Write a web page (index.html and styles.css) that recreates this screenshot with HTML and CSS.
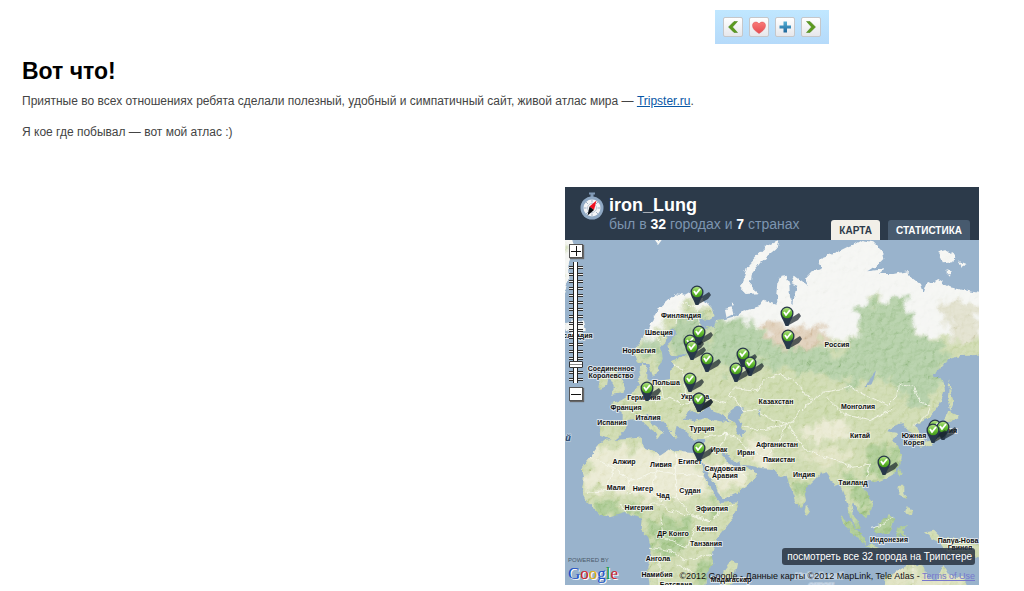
FILE: index.html
```html
<!DOCTYPE html>
<html lang="ru">
<head>
<meta charset="utf-8">
<title>Вот что!</title>
<link rel="stylesheet" href="styles.css">
</head>
<body>
<div class="page">
  <div class="rail">
    <nav class="toolbar" aria-label="Навигация">
      <button class="tool" type="button" aria-label="Назад"><svg viewBox="0 0 18 18"><path d="M10 3.500h3.500L8.500 9l5 5.500H10L4.500 9z" fill="#5a9a1f" stroke="#477f17" stroke-width=".5"/></svg></button>
      <button class="tool" type="button" aria-label="Нравится"><svg viewBox="0 0 18 18"><path d="M9 15.500C5 13 2.500 10.500 2.500 7.500c0-4 5-4.500 6.500-1.500 1.500-3 6.500-2.500 6.500 1.500 0 3-2.500 5.500-6.500 8z" fill="url(#heart)" stroke="#dc5054" stroke-width=".5"/><defs><linearGradient id="heart" x2="0" y2="1"><stop stop-color="#f97a78"/><stop offset="1" stop-color="#e54b50"/></linearGradient></defs></svg></button>
      <button class="tool" type="button" aria-label="Добавить"><svg viewBox="0 0 18 18"><path d="M7.500 3.500h3.500v4h4v3h-4v4H7.500v-4h-4v-3h4z" fill="url(#plus)"/><defs><linearGradient id="plus" x2="0" y2="1"><stop stop-color="#55afd4"/><stop offset="1" stop-color="#1c659b"/></linearGradient></defs></svg></button>
      <button class="tool" type="button" aria-label="Вперёд"><svg viewBox="0 0 18 18"><path d="M8 3.500H4.500L9.500 9l-5 5.500H8L13.500 9z" fill="#5a9a1f" stroke="#477f17" stroke-width=".5"/></svg></button>
    </nav>
  </div>
  <article class="post">
    <h1 class="title">Вот что!</h1>
    <p class="text">Приятные во всех отношениях ребята сделали полезный, удобный и симпатичный сайт, живой атлас мира — <a class="link" href="#tripster">Tripster.ru</a>.</p>
    <p class="text">Я кое где побывал — вот мой атлас :)</p>
  </article>
  <div class="rail">
    <section class="widget">
      <header class="head">
        <svg class="compass" viewBox="0 0 24 30">
          <path d="M9 1.500h6v2h-1.500V7h-3V3.500H9z" fill="#8099b5"/>
          <circle cx="12" cy="17" r="11.500" fill="#8fa8c3"/>
          <circle cx="12" cy="17" r="8.500" fill="#f4f5f7"/>
          <path d="M12 8.500v3m0 11v3M3.500 17h3m11 0h3M6 11l2 2m8 8 2 2M6 23l2-2m8-8 2-2" stroke="#a3b3c5" stroke-width="1"/>
          <circle cx="12" cy="17" r="4.500" fill="none" stroke="#bdc8d5"/>
          <path d="M16.500 9.500 9.500 15.500 14 19z" fill="#f00f20"/><path d="M9.500 15.500 14 19 7.500 24.500z" fill="#070b12"/>
        </svg>
        <div class="who"><h2 class="name">iron_Lung</h2><p class="stats">был в <b class="num">32</b> городах и <b class="num">7</b> странах</p></div>
        <nav class="tabs"><button class="tab tab-on" type="button">КАРТА</button><button class="tab" type="button">СТАТИСТИКА</button></nav>
      </header>
      <div class="map">
        <svg class="world" viewBox="0 0 414 345" preserveAspectRatio="xMidYMid slice">
          <defs>
            <filter id="rough" x="-5%" y="-5%" width="110%" height="110%"><feTurbulence type="fractalNoise" baseFrequency=".045" numOctaves="3" seed="4"/><feDisplacementMap in="SourceGraphic" scale="17" xChannelSelector="R" yChannelSelector="G"/></filter>
            <filter id="soft" x="-10%" y="-10%" width="120%" height="120%"><feTurbulence type="fractalNoise" baseFrequency=".03" numOctaves="4" seed="9" result="n"/><feDisplacementMap in="SourceGraphic" in2="n" scale="90" xChannelSelector="R" yChannelSelector="G"/><feGaussianBlur stdDeviation="4"/></filter>
            <filter id="relief" x="0" y="0" width="100%" height="100%"><feTurbulence type="fractalNoise" baseFrequency=".05" numOctaves="4" seed="3"/><feDiffuseLighting surfaceScale="11" lighting-color="#fff"><feDistantLight azimuth="225" elevation="50"/></feDiffuseLighting></filter>
            <filter id="shade"><feGaussianBlur stdDeviation=".7"/></filter>
            <path id="eurasia" d="M345 330L370 335 395 320 430 345 455 372 465 395 445 408 415 402 420 418 440 430 462 425 470 408 495 405 530 395 545 385 580 372 600 366 612 350 650 362 648 340 652 300 662 278 680 275 688 300 690 340 700 358 706 320 712 305 692 298 704 275 725 290 745 306 738 280 755 262 785 255 778 230 790 218 830 205 860 190 880 182 905 168 940 175 965 200 970 225 950 245 925 262 975 255 960 270 1000 270 1040 262 1060 285 1080 300 1090 330 1100 300 1130 285 1170 310 1210 318 1275 330V510L1225 515 1200 516 1165 526 1120 573 1150 588 1155 620 1140 660 1110 700 1068 722 1078 745 1095 768 1090 785 1070 775 1060 750 1040 735 1025 718 1000 725 985 745 1010 750 1000 770 1015 790 1025 820 1020 845 1000 870 975 883 945 895 925 890 905 900 920 925 938 950 935 975 915 1000 900 985 880 960 872 965 878 995 890 1012 902 1037 890 1032 875 1015 865 990 862 960 850 930 840 900 825 905 810 880 800 865 780 870 745 905 735 930 738 950 722 976 705 950 690 910 680 875 660 880 650 865 640 855 600 852 570 845 546 842 560 850 592 870 580 890 545 920 490 945 480 935 465 900 440 860 430 835 426 815 430 765 405 765 385 755 375 740 350 725 345 745 355 765 335 750 320 725 300 705 275 690 262 690 270 715 300 735 310 745 295 765 285 745 255 720 240 700 225 708 200 712 195 735 175 760 160 770 120 755 118 715 150 712 185 710 185 685 155 660 185 648 215 630 235 605 240 590 235 560 250 540 262 560 262 590 300 590 330 585 330 560 345 550 335 530 370 520 385 508 355 517 330 515 325 480 350 450 345 430 325 440 315 480 300 490 305 520 295 560 280 580 265 540 240 540 230 530 220 500 240 470 265 440 280 400 300 370z"/>
            <path id="africa" d="M130 770L160 768 200 765 245 760 248 785 275 800 300 815 330 795 370 805 415 808 425 830 430 860 445 900 465 935 482 957 533 952 533 968 520 1000 480 1050 465 1080 455 1110 460 1140 440 1165 435 1215 270 1215 262 1150 275 1100 265 1060 242 1035 245 1005 200 985 150 1000 115 990 80 950 65 920 72 880 65 850 90 820 110 790z"/>
            <path id="isles" d="M150 545L172 560 185 590 195 612 190 628 150 632 165 610 150 580zM120 585L142 580 138 605 115 612zM15 415L45 408 75 410 80 440 50 452 20 440zM5 160H35L45 200 25 245 25 290 5 350zM655 172L620 185 590 215 562 245 550 285 540 310 560 330 600 328 572 305 575 270 602 235 650 195zM1135 205L1160 198 1185 215 1180 232 1150 235zM1195 230L1220 240 1205 248zM1155 260L1172 265 1170 275zM285 168H305L295 182zM495 375L515 370 520 390 500 400zM515 355L525 358 522 367zM1168 585L1172 625 1182 655 1172 680 1163 650zM1165 682L1198 698 1175 710 1155 712zM1170 715L1165 750 1140 765 1105 785 1080 792 1085 780 1120 770 1150 750zM1018 855L1025 865 1018 878 1013 868zM1016 905L1030 905 1030 930 1045 945 1030 940 1015 930zM1040 970L1058 975 1052 995 1035 985zM840 992L860 1005 885 1030 915 1065 915 1080 885 1060 860 1025zM912 1082L940 1085 965 1095 940 1096zM940 1030L960 1020 990 990 1003 1005 985 1050 950 1050zM1010 1035L1045 1022 1030 1035 1040 1060 1020 1050 1015 1075zM1092 1045L1125 1040 1145 1060 1180 1060 1275 1085V1125L1210 1110 1165 1105 1140 1075 1110 1060zM970 1215L975 1175 1015 1160 1040 1145 1070 1142 1095 1150 1100 1175 1130 1190 1150 1140 1170 1175 1210 1180 1225 1215zM515 1125L531 1135 520 1195 500 1208 484 1195 490 1160zM738 965L748 980 740 993 734 980z"/>
            <path id="lakes" d="M375 705L380 690 390 675 415 690 430 678 445 668 455 680 495 697 510 715 480 712 440 702 400 712zM508 680L530 665 555 672 540 690 535 705 550 715 545 730 555 745 545 757 530 750 528 725 510 705zM483 798L500 812 528 838 540 832 546 845 525 850 500 830zM590 680L602 676 598 695zM935 600L945 575 948 562 935 578 915 612zM422 418L430 440 445 435 430 422zM405 450L415 453 410 465z"/>
            <clipPath id="land"><use href="#eurasia"/><use href="#africa"/><use href="#isles"/></clipPath>
            <linearGradient id="green" x2="0" y2="1"><stop stop-color="#b3e082"/><stop offset=".5" stop-color="#6cc238"/><stop offset="1" stop-color="#429a18"/></linearGradient>
            <g id="pin"><path d="M0 13 4 5 12 0 14 3 11 7z" fill="#17202b" opacity=".7" filter="url(#shade)"/><path d="M-6.500 0a6.500 6.500 0 0 1 13 0C6.500 4 4 6 1.500 13h-3C-4 6-6.500 4-6.500 0z" fill="#28384a"/><circle r="5.200" fill="url(#green)"/><path d="M-3-1-1 2 3-3" fill="none" stroke="#fff" stroke-width="1.900"/></g>
          </defs>
          <rect width="414" height="345" fill="#99b3cc"/>
          <g transform="scale(.33333) translate(-15 -168)">
            <g filter="url(#rough)">
              <g clip-path="url(#land)">
                <rect x="0" y="150" width="1280" height="1070" fill="#c8d5a6"/>
                <g filter="url(#soft)">
                  <path d="M0 130H1300V450L1230 470 1110 460 1050 420 1010 340 950 340 900 390 880 460 840 475 790 440 700 430 600 440 560 400 480 410 450 370 390 360 320 400 270 470 200 500 0 500z" fill="#f3f4f1"/>
                  <path d="M460 415L560 400 600 450 690 470 840 500 890 450 900 380 970 340 1030 345 1060 430 1160 500 1150 600 1080 650 960 580 880 600 720 560 600 540 500 560 420 520z" fill="#a8c79a"/>
                  <path d="M1130 350L1250 350 1270 480 1190 470z" fill="#dddcc6"/><path d="M600 430L700 425 790 425 810 470 730 490 690 500 620 465z" fill="#dac7af"/>
                  <path d="M330 410L400 380 440 400 420 500 340 520zM250 470L300 470 300 560 260 520zM1030 590L1110 620 1090 690 1040 650z" fill="#a6c598"/>
                  <path d="M100 790L400 800 450 930 300 950 80 910zM440 830L590 860 490 940zM550 760L640 770 640 840 570 830zM700 710L860 700 880 760 740 770z" fill="#e6e6cb"/>
                  <path d="M100 945L190 970 250 985 250 1005 120 995zM250 1010L380 1000 380 1090 300 1120 265 1070zM830 860L940 900 930 990 880 940zM900 800L1020 780 1020 860 940 880zM450 940L480 960 460 1010zM430 1110L460 1110 440 1202 400 1202zM690 880L720 970 760 900zM840 990L1050 990 1050 1080 840 1100z" fill="#a0c285"/>
                  <path d="M630 570L750 580 800 620 930 630 950 690 700 740 560 680zM250 610L360 590 390 680 250 700z" fill="#c5d4a2"/>
                  <path d="M700 800L880 790 860 840 790 850zM970 1160L1220 1160V1210H970z" fill="#dcdfbb"/>
                </g>
                <rect x="0" y="150" width="1280" height="1070" filter="url(#relief)" opacity=".5" style="mix-blend-mode:soft-light"/>
              </g>
              <use href="#lakes" fill="#99b3cc"/>
              <path d="M505 635L530 612 595 620 612 588 660 570 705 590 725 620 760 650 720 680 690 720 640 710 590 680 550 680 530 650zM760 650L790 625 870 610 985 665 1010 640 1015 600 1060 610 1080 650 1110 665 1100 690 1065 725M800 640L850 690 930 710 1000 675M550 725L600 740 680 720 740 800 825 830 880 850 930 840 920 885M680 720L660 770 620 820 550 790 530 760 490 750M430 760L500 750 480 790M250 650L330 640 370 660 440 640 500 660M300 590L310 640 280 660M370 590L380 640M340 540L370 560 370 590M345 420L360 350 410 370 420 430M300 480L280 430 325 370M440 860L500 840 560 880M90 820L160 850 210 890 290 860 300 815M160 850L140 920 80 925M210 890L200 930 270 920 290 860 350 870 350 805M350 870L430 875M270 920L300 950 350 940 350 870M180 960L200 985M240 980L280 960 310 960 330 980 410 1000 450 1010M300 1000L310 1060 380 1090 410 1020M270 1090L330 1100 370 1130 460 1110M300 1110V1202M350 1140L410 1170M350 940L390 990 450 1010 520 960M930 1030L970 1020 1000 1000" fill="none" stroke="#f8f9ef" stroke-width="3" opacity=".82"/>
            </g>
          </g>
          <path d="M348 320v25" stroke="#eef0df" stroke-dasharray="3 1"/>
          <g class="labels">
            <text x="116" y="78">Финляндия</text><text x="94" y="95">Швеция</text><text x="74" y="113">Норвегия</text><text x="13" y="98">сландия</text>
            <text x="46" y="131">Соединенное</text><text x="46" y="138">Королевство</text><text x="101" y="145">Польша</text><text x="79" y="160">Германия</text><text x="130" y="159">Украина</text><text x="61" y="170">Франция</text><text x="83" y="180">Италия</text><text x="47" y="185">Испания</text><text x="137" y="191">Турция</text>
            <text x="272" y="107">Россия</text><text x="211" y="164">Казахстан</text><text x="293" y="169">Монголия</text><text x="295" y="198">Китай</text><text x="349" y="198">Южная</text><text x="349" y="205">Корея</text><text x="379" y="193">Япония</text>
            <text x="212" y="207">Афганистан</text><text x="214" y="222">Пакистан</text><text x="154" y="212">Ирак</text><text x="181" y="215">Иран</text><text x="160" y="231">Саудовская</text><text x="160" y="238">Аравия</text><text x="239" y="237">Индия</text><text x="288" y="245">Таиланд</text>
            <text x="59" y="224">Алжир</text><text x="96" y="227">Ливия</text><text x="125" y="224">Египет</text><text x="51" y="250">Мали</text><text x="78" y="251">Нигер</text><text x="98" y="258">Чад</text><text x="125" y="253">Судан</text><text x="74" y="270">Нигерия</text><text x="147" y="271">Эфиопия</text><text x="142" y="291">Кения</text><text x="108" y="296">ДР Конго</text><text x="141" y="306">Танзания</text><text x="93" y="321">Ангола</text><text x="92" y="337">Намибия</text><text x="111" y="347">Ботсвана</text><text x="166" y="342">Мадагаскар</text>
            <text x="324" y="302">Индонезия</text><text x="393" y="303">Папуа-Нова</text><text x="395" y="310">Гвинея</text>
            <text class="sea" x="3" y="201">й</text><text class="sea sea-light" x="254" y="339">Индийский</text><text class="sea sea-light" x="256" y="348">океан</text>
          </g>
          <g>
            <use href="#pin" x="132" y="52"/><use href="#pin" x="222" y="73"/><use href="#pin" x="223" y="96"/><use href="#pin" x="134" y="92"/><use href="#pin" x="125" y="101"/><use href="#pin" x="127" y="107"/><use href="#pin" x="142" y="119"/><use href="#pin" x="178" y="114"/><use href="#pin" x="185" y="123"/><use href="#pin" x="171" y="129"/><use href="#pin" x="125" y="139"/><use href="#pin" x="82" y="148"/><use href="#pin" x="134" y="159"/><use href="#pin" x="134" y="159"/><use href="#pin" x="134" y="208"/><use href="#pin" x="370" y="186"/><use href="#pin" x="378" y="187"/><use href="#pin" x="368" y="190"/><use href="#pin" x="319" y="222"/>
          </g>
        </svg>
        <div class="zoom">
          <button class="step" type="button" aria-label="Приблизить"><svg viewBox="0 0 12 12"><path d="M1 6.500h10M6.500 1v10" stroke="#111"/></svg></button>
          <input class="scale" type="range" min="0" max="100" value="13" aria-label="Масштаб карты">
          <button class="step" type="button" aria-label="Отдалить"><svg viewBox="0 0 12 12"><path d="M1 6.500h10" stroke="#111"/></svg></button>
        </div>
        <div class="credit"><span class="powered">POWERED BY</span><span class="google"><span class="g-blue">G</span><span class="g-red">o</span><span class="g-gold">o</span><span class="g-blue">g</span><span class="g-green">l</span><span class="g-red">e</span></span></div>
        <div class="foot">
          <button class="more" type="button">посмотреть все 32 города на Трипстере</button>
          <p class="legal">©2012 Google - Данные карты ©2012 MapLink, Tele Atlas - <a class="terms" href="#terms">Terms of Use</a></p>
        </div>
      </div>
    </section>
  </div>
</div>
</body>
</html>
```
FILE: styles.css
```css
* { box-sizing: border-box; }
body { margin: 0; background: #fff; color: #444; font-family: "Liberation Sans", Arial, sans-serif; }
h1, h2, p { margin: 0; }
button { font: inherit; cursor: pointer; }
.page { padding: 10px 45px 6px 22px; }
.rail { width: 414px; max-width: 100%; margin-left: auto; }
.toolbar { display: flex; justify-content: center; gap: 6px; width: 114px; margin: 0 auto; padding: 7px 0; background: linear-gradient(#c0e7ff, #b5dafa); }
.tool { width: 20px; height: 20px; padding: 0; border: 1px solid #c5c7ca; border-radius: 2px; background: linear-gradient(#fff, #e6e7eb); }
.tool svg { display: block; width: 18px; height: 18px; }
.post { padding: 12px 0 47px; }
.title { font-size: 23px; line-height: 30px; color: #000; }
.text { font-size: 12px; line-height: 15px; margin-top: 8px; }
.text + .text { margin-top: 16px; }
.link { color: #0857a6; }
.head { display: flex; height: 53px; padding: 0 9px 0 15px; background: #2c3a4a; color: #fff; }
.compass { width: 24px; height: 30px; margin-top: 4px; flex: none; }
.who { flex: 1; margin-left: 5px; padding-top: 8px; white-space: nowrap; }
.name { font-size: 18px; line-height: 21px; }
.stats { font-size: 14px; line-height: 16px; color: #7d95b0; }
.num { color: #fff; }
.tabs { display: flex; gap: 8px; align-items: flex-end; }
.tab { height: 20px; padding: 0 8px; border: 0; border-radius: 3px 3px 0 0; background: #475a6e; color: #fff; font-size: 10px; font-weight: bold; }
.tab-on { background: #f2efe8; color: #2c3a4a; }
.map { position: relative; background: #99b3cc; overflow: hidden; }
.world { display: block; width: 100%; height: auto; }
.labels { font-size: 7px; font-weight: bold; text-anchor: middle; fill: #111; stroke: #fff; stroke-opacity: .65; stroke-width: 2px; stroke-linejoin: round; paint-order: stroke; }
.sea { font-size: 9px; font-style: italic; fill: #24446b; stroke-opacity: .3; }
.sea-light { fill: #c6d6e8; }
.zoom { position: absolute; left: 3px; top: 4px; display: flex; flex-direction: column; align-items: center; gap: 4px; width: 16px; }
.step { width: 14px; height: 14px; padding: 0; border: 1px solid #555; background: #fff; box-shadow: 1px 1px 1px #666; }
.step svg { display: block; width: 12px; height: 12px; }
.scale { appearance: none; writing-mode: vertical-lr; direction: rtl; width: 14px; height: 121px; margin: 0; background: linear-gradient(90deg, transparent 4px, #222 4px 5px, #fff 5px 8px, #222 8px 9px, transparent 9px), repeating-linear-gradient(transparent 0 4px, #333 4px 5px, #eee 5px 6px, #333 6px 7px); }
.scale::-webkit-slider-thumb { appearance: none; width: 14px; height: 7px; border: 1px solid #333; border-radius: 1px; background: linear-gradient(#fff 2px, #888 2px 3px, #fff 3px); }
.credit { position: absolute; left: 3px; bottom: 2px; display: flex; flex-direction: column; }
.powered { font-size: 6px; line-height: 7px; color: #4b5a69; }
.google { font-family: "Liberation Serif", serif; font-size: 17px; line-height: 19px; text-shadow: 1px 1px 0 #fff; }
.g-blue { color: #1b4fc4; }
.g-red { color: #d1232a; }
.g-gold { color: #e6b010; }
.g-green { color: #159a38; }
.foot { position: absolute; right: 4px; bottom: 2px; display: flex; flex-direction: column; align-items: flex-end; gap: 5px; }
.more { height: 17px; padding: 0 3px 0 5px; border: 0; border-radius: 3px; background: rgba(40, 51, 63, .85); color: #fff; font-size: 10px; white-space: nowrap; }
.legal { font-size: 9px; line-height: 13px; color: #111; white-space: nowrap; }
.terms { color: #7777cc; }
```
